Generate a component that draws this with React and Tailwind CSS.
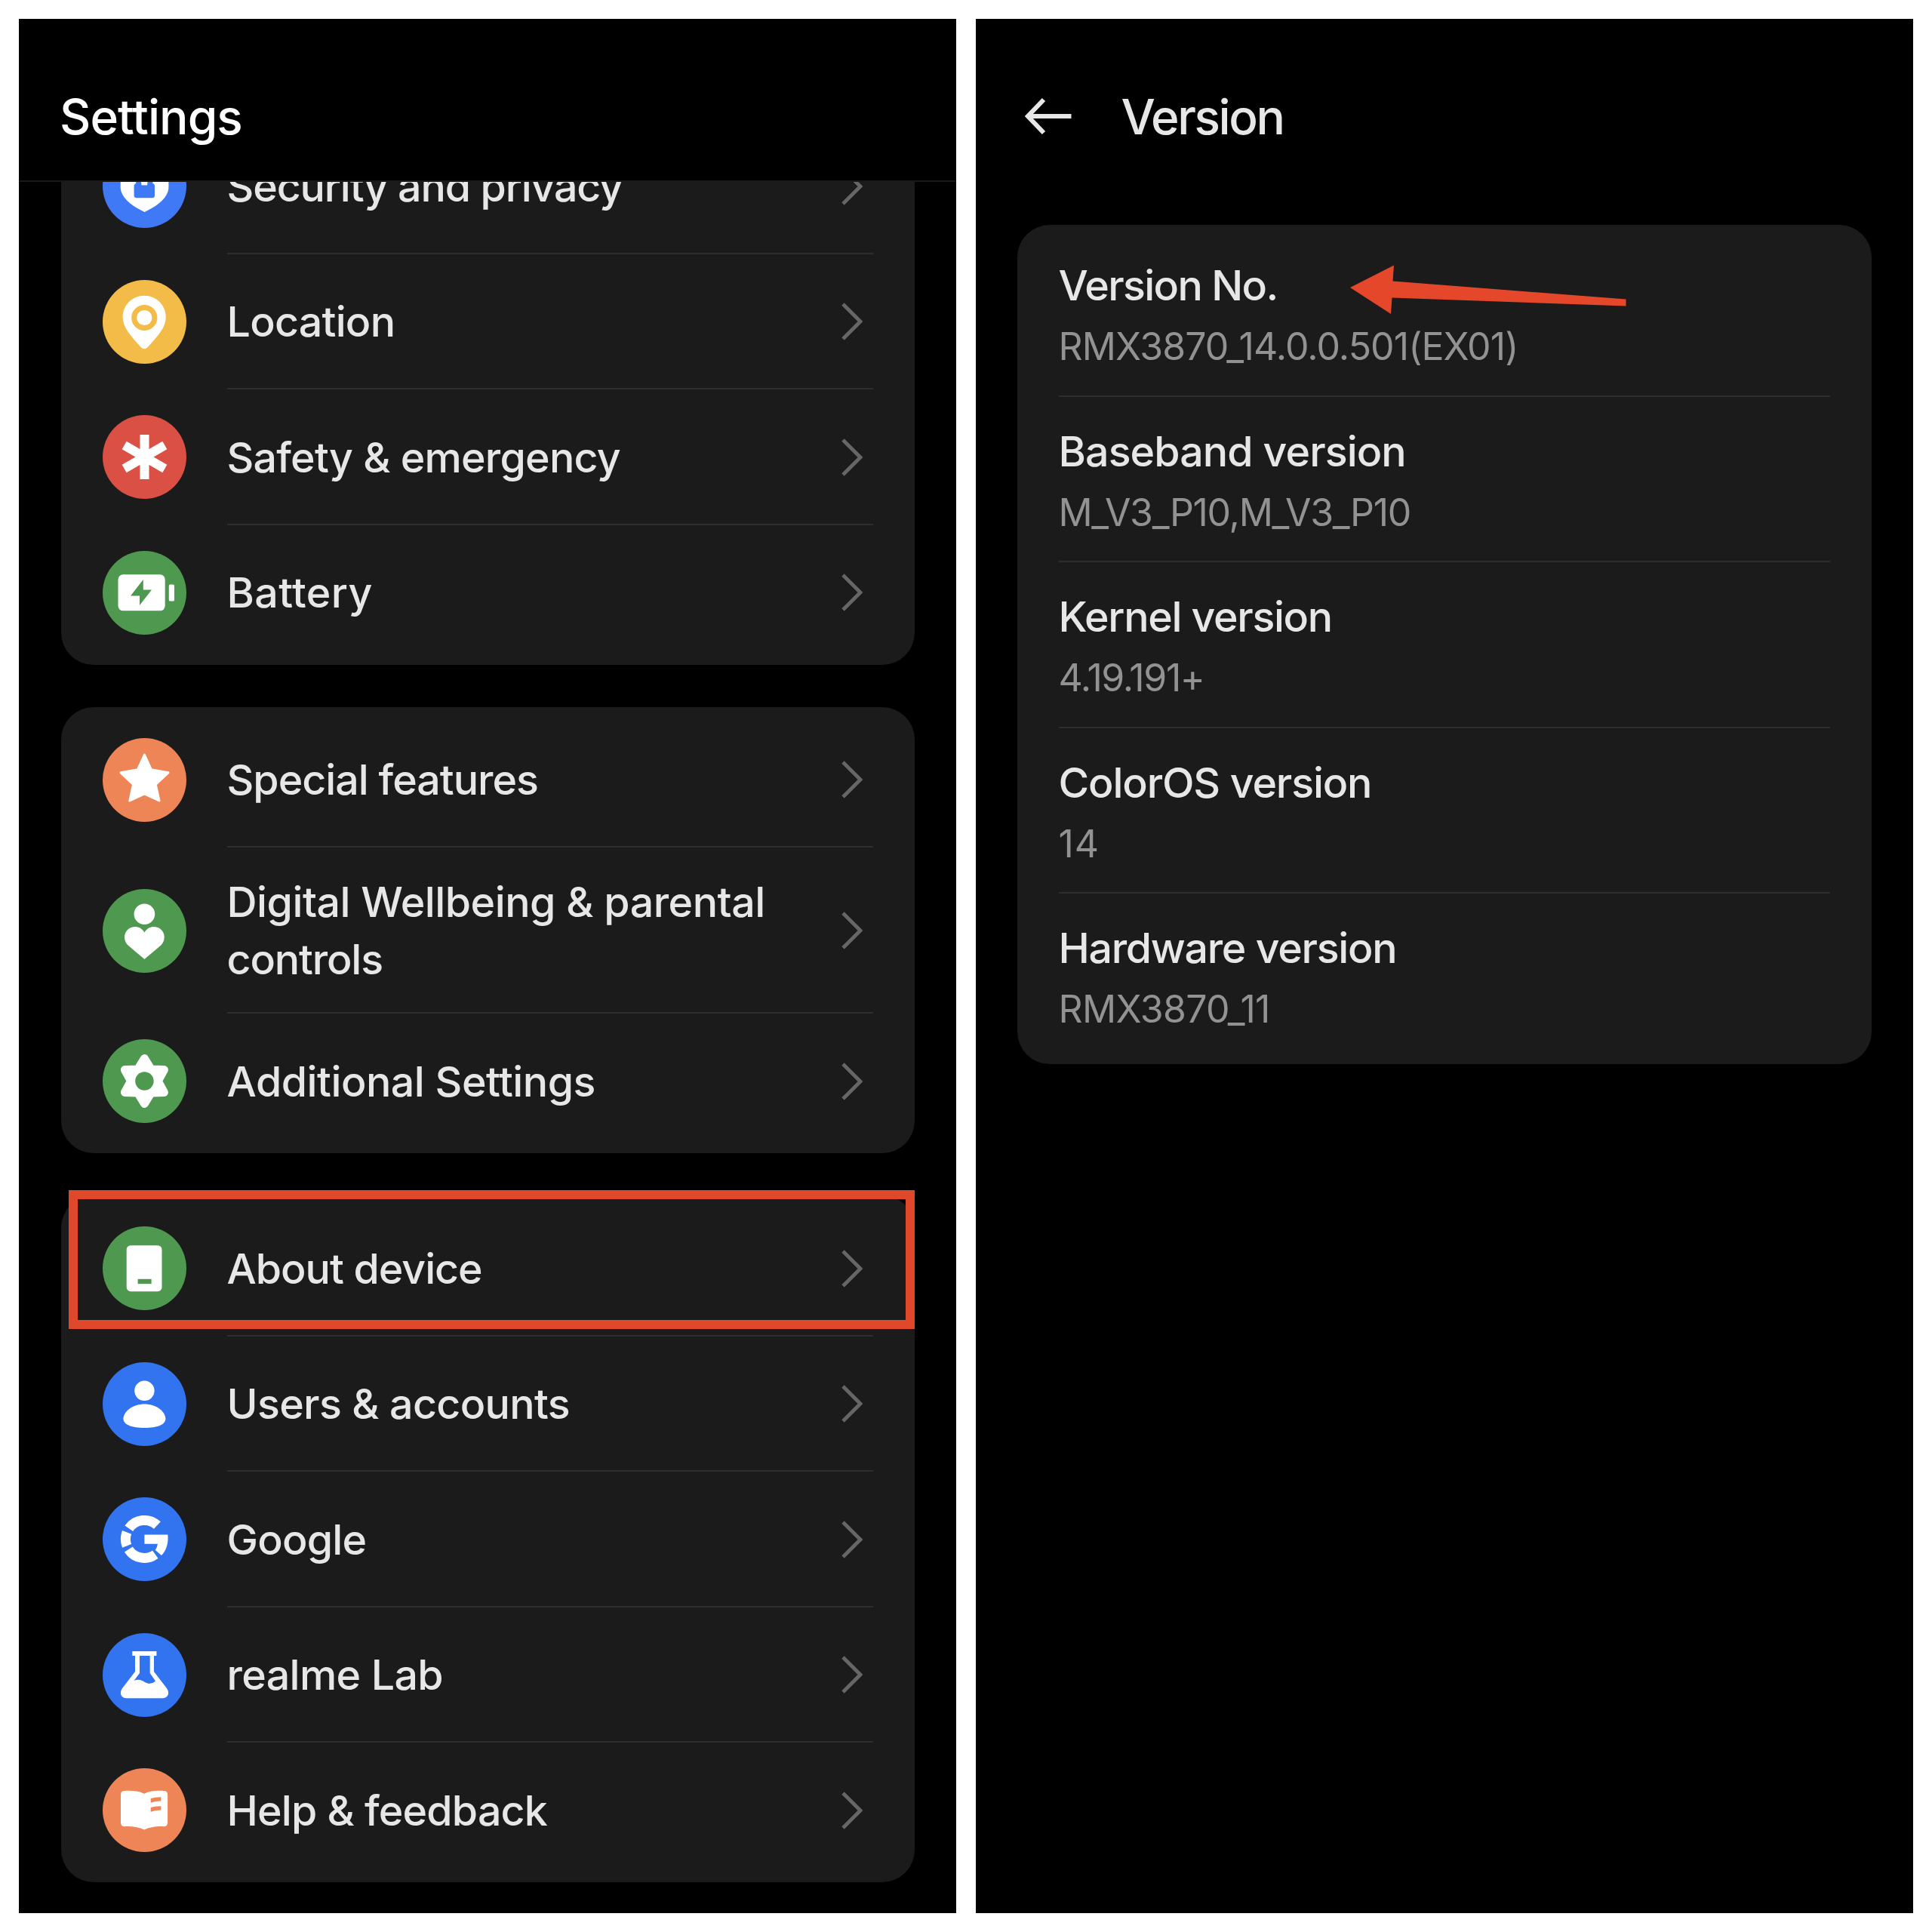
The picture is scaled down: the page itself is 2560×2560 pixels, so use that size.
import React from "react";

function Shield() {
  return (
    <>
      <path fill="#fff" d="M55.5 19 L87.4 31 V57 C87.4 71 72 82 55.5 90 C39 82 23.7 71 23.7 57 V31Z" />
      <rect x="41.6" y="52" width="27.4" height="19.3" rx="3.5" fill="#4079f5" />
      <path fill="none" stroke="#4079f5" strokeWidth="7" d="M47.7 55 V45 C47.7 34 62.9 34 62.9 45 V55" />
      <rect x="51.4" y="44" width="7.8" height="10.4" fill="#fff" />
    </>
  );
}

function Pin() {
  return (
    <>
      <path fill="#fff" d="M55.2 20.7 C39 20.7 26.6 33.5 26.6 49.3 C26.6 63 38 75 50.6 89 Q55.2 93.5 59.8 89 C72.5 75 83.8 63 83.8 49.3 C83.8 33.5 71.4 20.7 55.2 20.7Z" />
      <circle cx="55.3" cy="50" r="13.6" fill="none" stroke="#f3bc48" strokeWidth="7" />
    </>
  );
}

function Asterisk() {
  return (
    <g stroke="#fff" strokeWidth="12">
      <path d="M55.5 26 V85" />
      <path d="M55.5 24.5 V86.5" transform="rotate(60 55.5 55.5)" />
      <path d="M55.5 24.5 V86.5" transform="rotate(-60 55.5 55.5)" />
    </g>
  );
}

function Battery() {
  return (
    <>
      <rect x="20.5" y="31.3" width="62.2" height="48" rx="6.5" fill="#fff" />
      <rect x="87.8" y="44.5" width="7.2" height="22" rx="1.5" fill="#fff" />
      <path fill="#4e9850" d="M53.8 38 V51.5 H65 L49 72 V59.5 H37Z" />
    </>
  );
}

function Star() {
  return (
    <path
      fill="#fff"
      stroke="#fff"
      strokeWidth="3"
      strokeLinejoin="round"
      d="M55.4 22 L64.3 41.6 L87 45.8 L70.3 61.5 L75 83 L55.4 73.8 L35.8 83 L40.5 61.5 L24 45.8 L46.5 41.6Z"
    />
  );
}

function Wellbeing() {
  return (
    <g fill="#fff">
      <circle cx="55.4" cy="33.2" r="13.8" />
      <path d="M55.4 93 L33.5 74.5 C27.2 68 27.5 58 34.5 52.7 C41.5 48 51 49.8 55.4 57.5 C59.8 49.8 69.3 48 76.3 52.7 C83.3 58 83.6 68 77.3 74.5Z" />
    </g>
  );
}

function Gear() {
  return (
    <>
      <path
        fill="#fff"
        stroke="#fff"
        strokeWidth="11"
        strokeLinejoin="round"
        d="M55.4 25.5 L64.3 40.1 L81.4 40.5 L73.2 55.5 L81.4 70.5 L64.3 70.9 L55.4 85.5 L46.5 70.9 L29.4 70.5 L37.6 55.5 L29.4 40.5 L46.5 40.1Z"
      />
      <circle cx="55.4" cy="55.5" r="12.2" fill="#4e9850" />
    </>
  );
}

function Device() {
  return (
    <>
      <rect x="31.7" y="25.2" width="46.8" height="61" rx="5.5" fill="#fff" />
      <rect x="46.6" y="69.8" width="18" height="6.4" fill="#4e9850" />
    </>
  );
}

function User() {
  return (
    <g fill="#fff">
      <circle cx="55.4" cy="37.8" r="13.2" />
      <path d="M27.4 74.5 C28.5 64 41 55.5 55.4 55.5 C70 55.5 82.3 64 83.4 74.5 C83.6 83 72 87 55.4 87 C39 87 27.2 83 27.4 74.5Z" />
    </g>
  );
}

function Google() {
  return (
    <>
      <g fill="none" stroke="#fff" strokeWidth="13">
        <path d="M72.4 37.1 A25 25 0 0 0 34.8 41.2" />
        <path d="M32.1 46.4 A25 25 0 0 0 32.1 64.4" />
        <path d="M34.3 68.9 A25 25 0 0 0 69.8 75.8" />
      </g>
      <path fill="#fff" d="M55.4 49.4 H86.3 C87.6 60 84.5 70.5 77.9 77 L69.6 69.7 C71.6 67.5 72.4 64.5 72.9 61.7 H55.4Z" />
    </>
  );
}

function Flask() {
  return (
    <path
      fill="#fff"
      fillRule="evenodd"
      d="M39.3 24 H71.4 V30 H68 V51 L85.3 73.5 C89.5 80 86 86.3 79 86.3 H32 C25 86.3 21.5 80 25.7 73.5 L43 51 V30 H39.3Z M49 30 V53 L41.5 63 C47 60.5 52 62 56 65 C61 68 66 67 70 63.5 L62.7 53 V30Z"
    />
  );
}

function Book() {
  return (
    <>
      <path fill="#fff" d="M29 30 C38 29.5 48 30 55.1 33.8 C62 30 72 29.5 81 30 Q86.1 30 86.1 35 V72 Q86.1 77.2 81 77.2 C72 76.5 62 78 55.1 81.5 C48 78 38 76.5 29 77.2 Q24 77.2 24 72 V35 Q24 30 29 30Z" />
      <path fill="#ee8557" d="M63.7 40 Q70 38 77.4 38.2 V43.6 Q70 43.5 63.7 45.7Z M63.7 52 Q70 50 77.4 50.2 V55.6 Q70 55.5 63.7 57.7Z" />
    </>
  );
}

const groups = [
  [
    { label: "Security and privacy", tracking: "tracking-[-1.14px]", color: "bg-[#4079f5]", icon: Shield },
    { label: "Location", tracking: "tracking-[-0.75px]", color: "bg-[#f3bc48]", icon: Pin },
    { label: "Safety & emergency", tracking: "tracking-[-0.79px]", color: "bg-[#da5045]", icon: Asterisk },
    { label: "Battery", tracking: "tracking-[0.4px]", color: "bg-[#4e9850]", icon: Battery },
  ],
  [
    { label: "Special features", tracking: "tracking-[-1px]", color: "bg-[#ee8557]", icon: Star },
    {
      label: (
        <>
          Digital Wellbeing & parental <span className="tracking-[-1.15px]">controls</span>
        </>
      ),
      tracking: "tracking-[-0.5px]",
      color: "bg-[#4e9850]",
      icon: Wellbeing,
      tall: true,
    },
    { label: "Additional Settings", tracking: "tracking-[-0.5px]", color: "bg-[#4e9850]", icon: Gear },
  ],
  [
    { label: "About device", tracking: "tracking-[-1.04px]", color: "bg-[#4e9850]", icon: Device },
    { label: "Users & accounts", tracking: "tracking-[-0.65px]", color: "bg-[#3273f0]", icon: User },
    { label: "Google", tracking: "tracking-[-0.8px]", color: "bg-[#3273f0]", icon: Google },
    { label: "realme Lab", tracking: "tracking-[-0.65px]", color: "bg-[#3273f0]", icon: Flask },
    { label: "Help & feedback", tracking: "tracking-[-0.8px]", color: "bg-[#ee8557]", icon: Book },
  ],
];

const versions = [
  { label: "Version No.", tracking: "tracking-[-1.65px]", value: "RMX3870_14.0.0.501(EX01)", valueTracking: "tracking-[-0.92px]" },
  { label: "Baseband version", tracking: "tracking-[-0.92px]", value: "M_V3_P10,M_V3_P10", valueTracking: "tracking-[-1.3px]" },
  { label: "Kernel version", tracking: "tracking-[-1.35px]", value: "4.19.191+", valueTracking: "tracking-[-1.4px]" },
  { label: "ColorOS version", tracking: "tracking-[-1.15px]", value: "14", valueTracking: "tracking-[0.8px]" },
  { label: "Hardware version", tracking: "tracking-[-1.3px]", value: "RMX3870_11", valueTracking: "tracking-[-0.7px]" },
];

function SettingRow({ item, last }) {
  const Icon = item.icon;

  return (
    <div className={`flex items-center pl-[54.5px] ${item.tall ? "h-[220px]" : "h-[179.5px]"}`}>
      <div className={`size-[111px] shrink-0 rounded-full ${item.color}`}>
        <svg viewBox="0 0 111 111" className="size-full">
          <Icon />
        </svg>
      </div>

      <div
        className={`ml-[54.5px] mr-[55px] h-full flex-1 flex items-center justify-between border-b-2 ${
          last ? "border-transparent" : "border-[#2e2e2e]"
        }`}
      >
        <span
          className={`-ml-[0.5px] pt-[1px] w-[730px] text-[55.5px] leading-[75.5px] font-medium text-[#e7e7e7] ${item.tracking}`}
        >
          {item.label}
        </span>
        <svg viewBox="0 0 28 50" className="mr-[14px] mt-[2px] w-[28px] h-[50px] shrink-0">
          <path d="M2 2 L25 25 L2 48" fill="none" stroke="#666666" strokeWidth="4.8" />
        </svg>
      </div>
    </div>
  );
}

function SettingsScreen() {
  return (
    <div className="w-[1242px] h-[2510px] bg-black flex flex-col overflow-hidden">
      <div className="h-[216px] shrink-0 border-b-2 border-[#191919] pl-[54px] pt-[91px]">
        <h1 className="text-[64px] leading-[78px] font-medium tracking-[-0.95px] text-white">
          Settings
        </h1>
      </div>

      {/* list is scrolled, first row sits half under the header */}
      <div className="flex-1 overflow-hidden pl-[56px] pr-[55px]">
        <div className="-mt-[91px] flex flex-col gap-[56px]">
          {groups.map((items, g) => (
            <div key={g} className="relative rounded-[43px] bg-[#1b1b1b] pt-[7px] pb-[5.5px]">
              {items.map((item, i) => (
                <SettingRow key={i} item={item} last={i === items.length - 1} />
              ))}
              {/* highlight around "About device" */}
              {g === 2 && (
                <div className="absolute left-[10px] right-0 -top-[7px] h-[184px] border-12 border-[#e0482b]" />
              )}
            </div>
          ))}
        </div>
      </div>
    </div>
  );
}

function VersionScreen() {
  return (
    <div className="w-[1242px] h-[2510px] bg-black">
      <div className="h-[273px] flex pl-[65px] pt-[91px]">
        <svg viewBox="0 0 62 50" className="mt-[13px] w-[62px] h-[50px]">
          <path d="M61.5 25 H4 M25 3 L4 25 L25 47" fill="none" stroke="#e7e7e7" strokeWidth="6" />
        </svg>
        <h1 className="ml-[65.5px] text-[64px] leading-[78px] font-medium tracking-[-2.4px] text-[#e7e7e7]">
          Version
        </h1>
      </div>

      <div className="relative ml-[55px] w-[1132px] rounded-[43px] bg-[#1b1b1b] pt-[8px] pb-[6px]">
        {versions.map((v, i) => (
          <div
            key={v.label}
            className={`mx-[55px] h-[219.6px] pt-[34px] border-b-2 ${
              i === versions.length - 1 ? "border-transparent" : "border-[#2e2e2e]"
            }`}
          >
            <div className={`-ml-[0.5px] text-[55.5px] leading-[76px] font-medium text-[#e7e7e7] ${v.tracking}`}>
              {v.label}
            </div>
            <div className={`-ml-[0.5px] mt-[8px] text-[50px] leading-[70px] text-[#929292] ${v.valueTracking}`}>
              {v.value}
            </div>
          </div>
        ))}

        <svg viewBox="0 0 366 65" className="absolute left-[441px] top-[53px] w-[366px] h-[65px]">
          <path
            fill="#e5472a"
            d="M0 30 L58 0.5 L56.5 21.5 L365.5 45.5 V54.5 L55.5 43.5 L54 65Z"
          />
        </svg>
      </div>
    </div>
  );
}

export default function App() {
  return (
    <div className="w-[2560px] h-[2560px] bg-white p-[25px] flex gap-[26px] overflow-hidden font-['Inter',sans-serif]">
      <SettingsScreen />
      <VersionScreen />
    </div>
  );
}
